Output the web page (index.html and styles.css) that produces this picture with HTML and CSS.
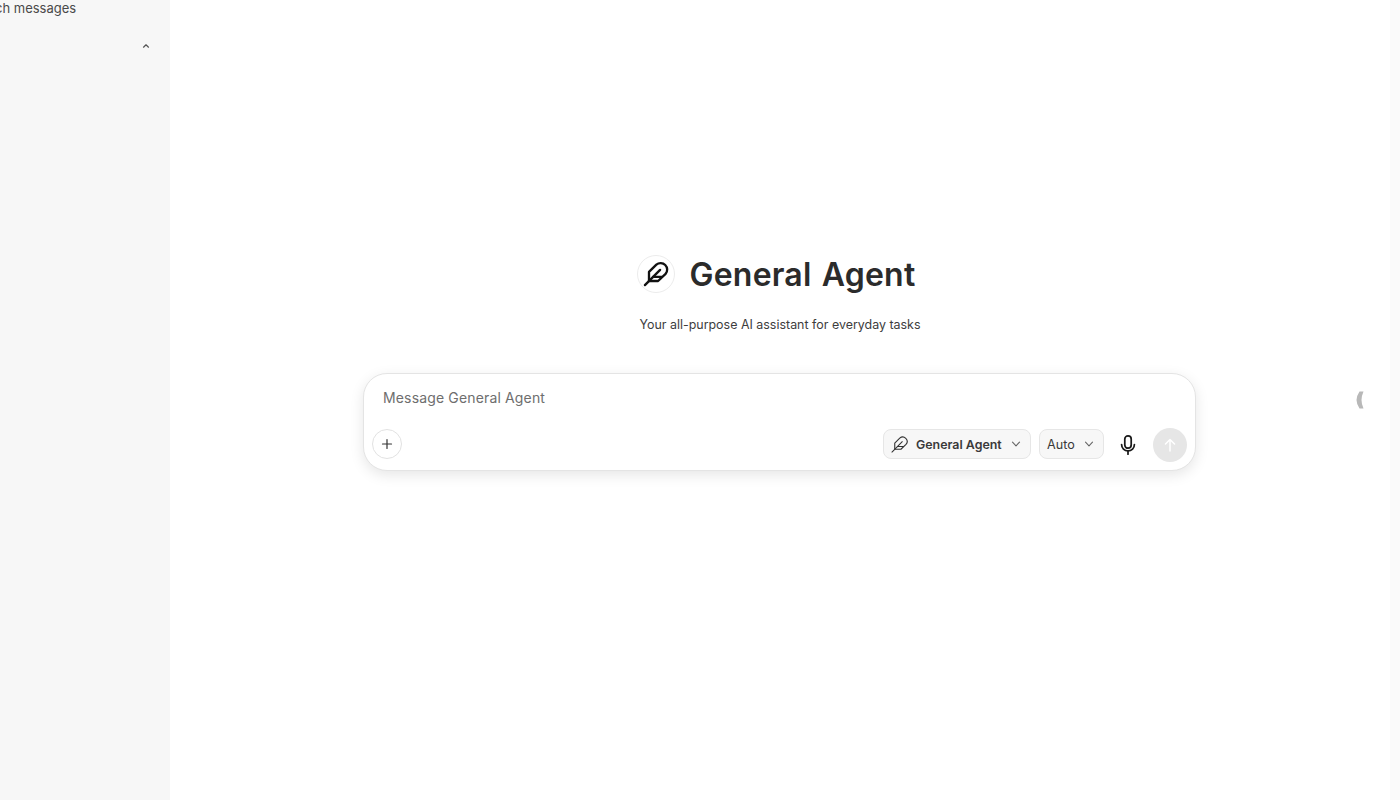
FILE: index.html
```html
<!DOCTYPE html>
<html lang="en">
<head>
    <meta charset="UTF-8">
    <meta name="viewport" content="width=device-width, initial-scale=1.0">
    <title>General Agent</title>
    <link rel="stylesheet" href="styles.css">
</head>
<body>
    <aside class="sidebar">
        <div class="search-label">Search messages</div>
        <div class="section-row">
            <svg class="section-chevron" width="10" height="10" viewBox="0 0 10 10" fill="none" stroke="#555" stroke-width="1.2" stroke-linecap="round" stroke-linejoin="round"><path d="M2.500 6.200 5 3.800l2.500 2.400"/></svg>
        </div>
    </aside>

    <main class="main">
        <div class="agent-title">
            <div class="agent-logo">
                <svg width="28" height="28" viewBox="0 0 24 24" fill="none" stroke="#111" stroke-width="2" stroke-linecap="round" stroke-linejoin="round"><path d="M20.200 11.900a5.600 5.600 0 0 0-7.900-7.900L6 10.200V18h7.800z"/><path d="M15.500 8.500 2.500 21.500"/><path d="M17 14.500H9.500"/></svg>
            </div>
            <h1>General Agent</h1>
        </div>
        <p class="agent-desc">Your all-purpose AI assistant for everyday tasks</p>

        <div class="composer">
            <div class="composer-input">Message General Agent</div>
            <div class="composer-bar">
                <button class="add-btn">
                    <svg width="14" height="14" viewBox="0 0 14 14" fill="none" stroke="#333" stroke-width="1.200" stroke-linecap="round"><path d="M7 2.500v9M2.500 7h9"/></svg>
                </button>
                <div class="composer-tools">
                    <button class="pill pill-agent">
                        <svg width="19" height="19" viewBox="0 0 24 24" fill="none" stroke="#333" stroke-width="1.400" stroke-linecap="round" stroke-linejoin="round"><path d="M20.200 11.900a5.600 5.600 0 0 0-7.900-7.900L6 10.200V18h7.800z"/><path d="M15.500 8.500 2.500 21.500"/><path d="M17 14.500H9.500"/></svg>
                        <span>General Agent</span>
                        <svg class="chev" width="10" height="10" viewBox="0 0 10 10" fill="none" stroke="#666" stroke-width="1.100" stroke-linecap="round" stroke-linejoin="round"><path d="M1.500 3.200 5 6.800l3.500-3.600"/></svg>
                    </button>
                    <button class="pill pill-auto">
                        <span>Auto</span>
                        <svg class="chev" width="10" height="10" viewBox="0 0 10 10" fill="none" stroke="#666" stroke-width="1.100" stroke-linecap="round" stroke-linejoin="round"><path d="M1.500 3.200 5 6.800l3.500-3.600"/></svg>
                    </button>
                    <button class="mic-btn">
                        <svg width="26" height="26" viewBox="0 0 24 24" fill="none" stroke="#1a1a1a" stroke-width="1.900" stroke-linecap="round" stroke-linejoin="round"><rect x="8.500" y="2" width="7" height="13.500" rx="3.500"/><path d="M5 11.500a7 7 0 0 0 14 0"/><path d="M12 18.500V22"/></svg>
                    </button>
                    <button class="send-btn">
                        <svg width="16" height="16" viewBox="0 0 16 16" fill="none" stroke="#fff" stroke-width="1.500" stroke-linecap="round" stroke-linejoin="round"><path d="M8 14V2.500M3.500 7 8 2.500 12.500 7"/></svg>
                    </button>
                </div>
            </div>
        </div>

        <svg class="panel-handle" width="8" height="18" viewBox="0 0 8 18"><path d="M7.500 0.500H3.500Q0.500 5 0.500 9t3 8.500H7.500Q5.500 13 5.500 9T7.500 0.500z" fill="#b8b8b8"/></svg>
    </main>

    <div class="edge"></div>
</body>
</html>
```

FILE: styles.css
```css
* {
    box-sizing: border-box;
    margin: 0;
    padding: 0;
    font-family: 'Inter', sans-serif;
}

body {
    display: flex;
    height: 100vh;
    overflow: hidden;
    background: white;
}

.sidebar {
    width: 170px;
    flex-shrink: 0;
    background: #f7f7f7;
    overflow: hidden;
}

.search-label {
    margin-left: -33px;
    font-size: 13px;
    line-height: 16px;
    color: #4a4a4a;
    white-space: nowrap;
}

.section-row {
    display: flex;
    justify-content: flex-end;
    padding: 25px 19px 0 0;
}

.section-chevron {
    display: block;
}

.main {
    position: relative;
    flex: 1;
    display: flex;
    flex-direction: column;
    align-items: center;
    padding-top: 255px;
}

.agent-title {
    display: flex;
    align-items: center;
    gap: 15px;
    height: 38px;
    margin-right: 8px;
}

.agent-logo {
    width: 38px;
    height: 38px;
    border: 1px solid #ececec;
    border-radius: 50%;
    display: flex;
    align-items: center;
    justify-content: center;
}

h1 {
    margin-top: 2px;
    font-size: 32px;
    font-weight: 600;
    line-height: 38px;
    color: #2b2b2b;
    letter-spacing: 0.2px;
    word-spacing: 2px;
    white-space: nowrap;
}

.agent-desc {
    margin-top: 24px;
    font-size: 12.45px;
    line-height: 16px;
    color: #3d3d3d;
}

.composer {
    width: 833px;
    height: 98px;
    margin-top: 40px;
    margin-right: 1px;
    background: white;
    border: 1px solid #e4e4e4;
    border-radius: 24px;
    box-shadow: 0 4px 14px rgba(0, 0, 0, 0.1);
}

.composer-input {
    padding: 15px 19px 0;
    font-size: 14px;
    line-height: 17px;
    letter-spacing: 0.15px;
    color: #6e6e6e;
}

.composer-bar {
    display: flex;
    justify-content: space-between;
    align-items: center;
    margin-top: 20px;
    padding: 0 8px;
}

button {
    display: flex;
    align-items: center;
    justify-content: center;
    border: none;
    background: none;
}

.add-btn {
    width: 30px;
    height: 30px;
    border: 1px solid #e2e2e2;
    border-radius: 50%;
    background: white;
}

.composer-tools {
    display: flex;
    align-items: center;
}

.pill {
    height: 30px;
    justify-content: flex-start;
    background: #f7f7f7;
    border: 1px solid #e6e6e6;
    border-radius: 8px;
    color: #3a3a3a;
}

.pill-agent {
    width: 148px;
    padding-left: 6px;
    gap: 7px;
    font-size: 12.4px;
    font-weight: 600;
}

.pill-agent .chev {
    margin-left: 2px;
}

.pill-auto {
    width: 65px;
    padding-left: 7px;
    gap: 9px;
    margin-left: 8px;
    font-size: 12.6px;
}

.mic-btn {
    width: 22px;
    height: 22px;
    margin-left: 13px;
    margin-top: 2px;
}

.send-btn {
    width: 34px;
    height: 34px;
    margin-left: 14px;
    margin-top: 2px;
    border-radius: 50%;
    background: #e6e6e6;
}

.panel-handle {
    position: absolute;
    top: 391px;
    right: 26px;
}

.edge {
    width: 10px;
    flex-shrink: 0;
    background: #fafafa;
}
```
